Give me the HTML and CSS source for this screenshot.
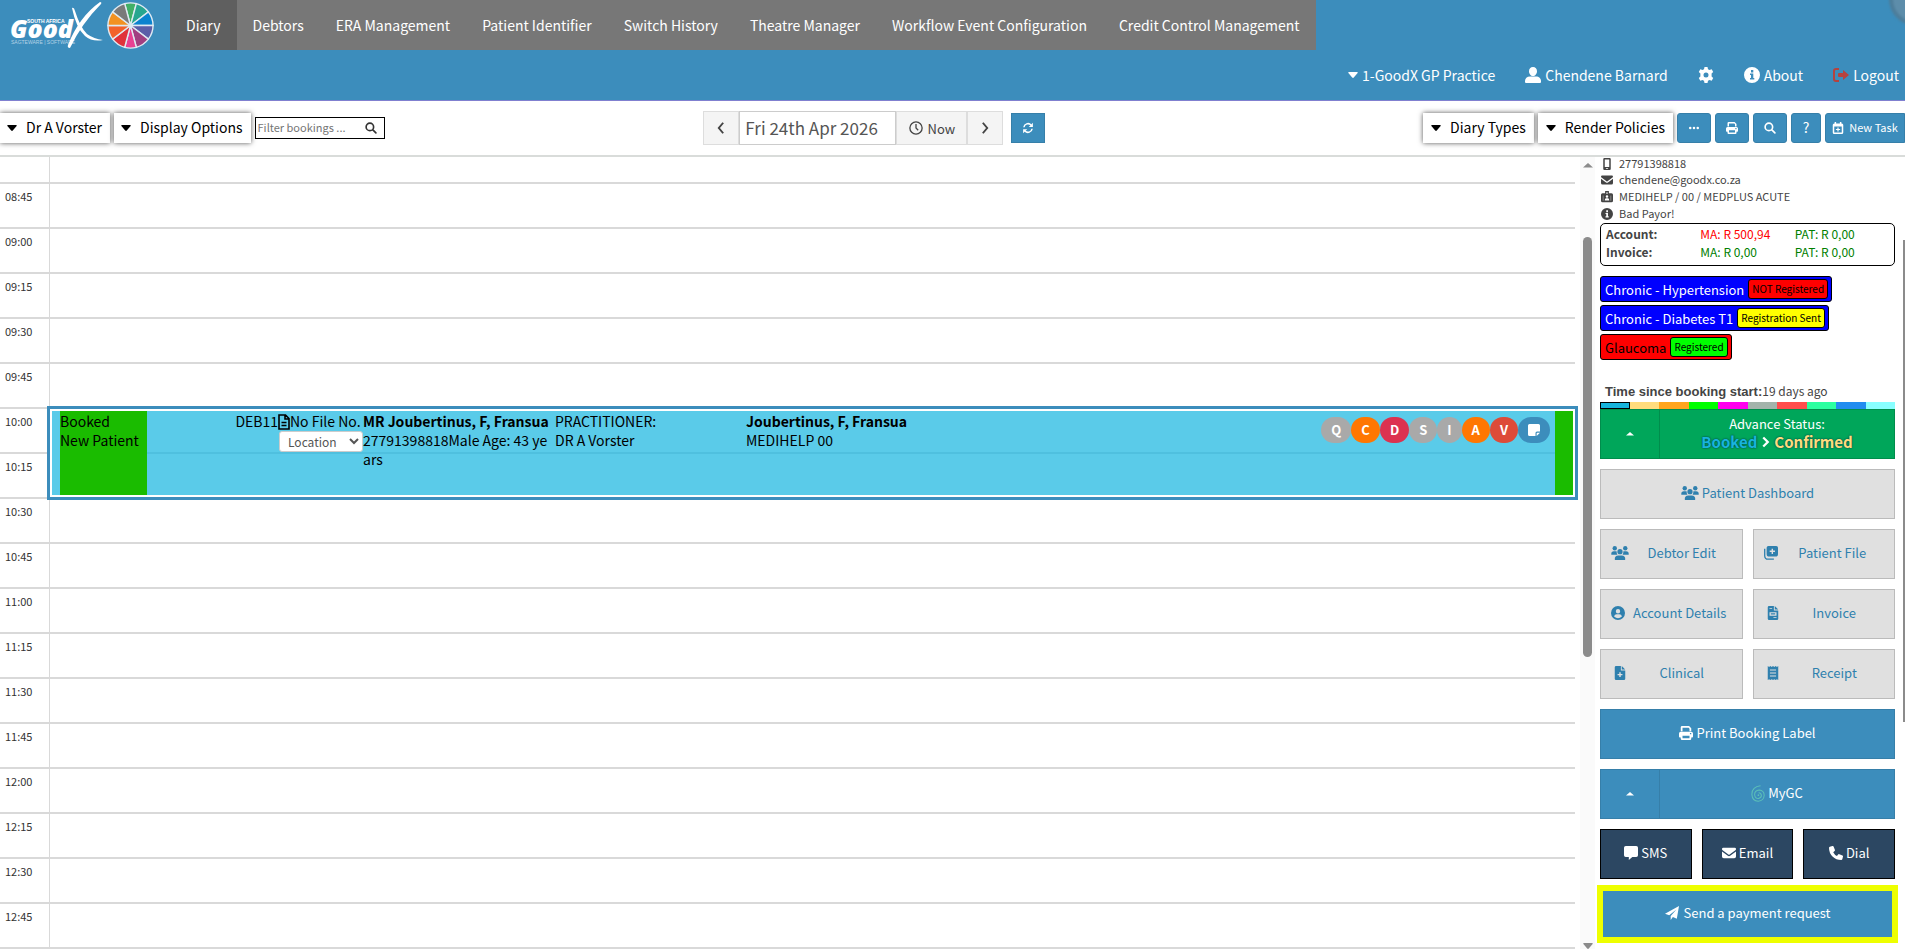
FILE: index.html
```html
<!DOCTYPE html>
<html lang="en">
<head>
    <meta charset="UTF-8">
    <meta name="viewport" content="width=device-width, initial-scale=1.0">
    <title>GoodX Diary</title>
    <link rel="stylesheet" href="styles.css">
</head>
<body>

    <!-- icon sprite -->
    <svg class="sprite" aria-hidden="true">
        <symbol id="i-down" viewBox="0 0 10 6"><path d="M1 0h8q1.400 0 .6 1L5.800 5.500q-.8.8-1.600 0L.4 1Q-.4 0 1 0z"/></symbol>
        <symbol id="i-up" viewBox="0 0 10 6"><path d="M0 5.500L5 1l5 4.500z"/></symbol>
        <symbol id="i-search" viewBox="0 0 16 16"><path fill="none" stroke="currentColor" stroke-width="2.200" stroke-linecap="round" d="M10.500 10.500l4 4M11.500 6.500a5 5 0 1 1-10 0a5 5 0 0 1 10 0z"/></symbol>
        <symbol id="i-left" viewBox="0 0 16 16"><path fill="none" stroke="currentColor" stroke-width="2.200" d="M10.500 2L5.500 8l5 6"/></symbol>
        <symbol id="i-right" viewBox="0 0 16 16"><path fill="none" stroke="currentColor" stroke-width="2.200" d="M5.500 2l5 6l-5 6"/></symbol>
        <symbol id="i-next" viewBox="0 0 12 16"><path fill="none" stroke="currentColor" stroke-width="3" d="M3 2l6 6l-6 6"/></symbol>
        <symbol id="i-clock" viewBox="0 0 16 16"><g fill="none" stroke="currentColor" stroke-width="1.500"><circle cx="8" cy="8" r="7"/><path d="M8 3.500V8l2.500 2.500"/></g></symbol>
        <symbol id="i-sync" viewBox="0 0 16 16"><path fill="none" stroke="currentColor" stroke-width="2" d="M2.500 7a5.500 5.500 0 0 1 9.500-3M13.500 9a5.500 5.500 0 0 1-9.500 3"/><path d="M14.500 1v5.500H9zM1.500 15V9.500H7z"/></symbol>
        <symbol id="i-user" viewBox="0 0 16 16"><path d="M8 0c2.500 0 4 1.800 4 4.200S10.300 9 8 9S4 6.600 4 4.200S5.500 0 8 0zM5 9.500h6c3 0 5 2 5 4.500v1q0 1-1 1H1q-1 0-1-1v-1c0-2.500 2-4.500 5-4.500z"/></symbol>
        <symbol id="i-gear" viewBox="0 0 16 16"><path fill-rule="evenodd" d="M6.500 0h3l.5 2.200 1.500.9 2.200-.8 1.500 2.700L13.600 6.500v3l1.600 1.500-1.500 2.700-2.200-.8-1.500.9-.5 2.200h-3L6 13.800l-1.500-.9-2.200.8L.8 11l1.600-1.500v-3L.8 5l1.500-2.700 2.200.8L6 2.200zM8 5.500a2.500 2.500 0 1 0 0 5a2.500 2.500 0 0 0 0-5z"/></symbol>
        <symbol id="i-info" viewBox="0 0 16 16"><path fill-rule="evenodd" d="M8 0a8 8 0 1 1 0 16A8 8 0 0 1 8 0zM7 3v2.500h2.300V3zM6 6.500V8h1v3H6v1.500h4.300V11h-1V6.500z"/></symbol>
        <symbol id="i-logout" viewBox="0 0 16 16"><path fill="none" stroke="currentColor" stroke-width="2" d="M6 2H3q-2 0-2 2v8q0 2 2 2h3"/><path d="M10 3l6 5-6 5v-3H6q-1 0-1-1V7q0-1 1-1h4z"/></symbol>
        <symbol id="i-dots" viewBox="0 0 16 16"><circle cx="3" cy="8" r="1.700"/><circle cx="8" cy="8" r="1.700"/><circle cx="13" cy="8" r="1.700"/></symbol>
        <symbol id="i-print" viewBox="0 0 16 16"><path fill-rule="evenodd" d="M3.500 0h8L14 2.500V6h-2V3l-1-1H4v4H2V1.500Q2 0 3.500 0zM2 6.500h12q2 0 2 2V12q0 1-1 1h-1v1.500q0 1.500-1.500 1.500h-9Q2 16 2 14.500V13H1q-1 0-1-1V8.500q0-2 2-2zM4 11v3h8v-3zM12.500 8v1.500H14V8z"/></symbol>
        <symbol id="i-plan" viewBox="0 0 16 16"><path fill-rule="evenodd" d="M3.500 0h2v2h5V0h2v2H13q2 0 2 2v10q0 2-2 2H3q-2 0-2-2V4q0-2 2-2h.5zM3 6v8h10V6zM7.200 7.200h1.600V9.200h2v1.600h-2v2H7.200v-2h-2V9.200h2z"/></symbol>
        <symbol id="i-phone" viewBox="0 0 16 16"><path fill-rule="evenodd" d="M4.500 0h7Q13 0 13 1.500v13Q13 16 11.500 16h-7Q3 16 3 14.500v-13Q3 0 4.500 0zM5 2v10h6V2zM6.500 13.300v1h3v-1z"/></symbol>
        <symbol id="i-mail" viewBox="0 0 16 16"><path d="M1.500 2h13Q16 2 16 3.500q0 .8-.7 1.300L8.700 9.700q-.7.500-1.400 0L.7 4.800Q0 4.300 0 3.500 0 2 1.500 2zM0 6.200l6.700 5q1.300 1 2.600 0l6.700-5V12q0 2-2 2H2q-2 0-2-2z"/></symbol>
        <symbol id="i-badge" viewBox="0 0 16 16"><path fill-rule="evenodd" d="M5.500 0h5v3H14q2 0 2 2v8q0 2-2 2H2q-2 0-2-2V5q0-2 2-2h3.500zM7.300 1.500V4h1.400V1.500zM8 5.500a1.700 1.700 0 1 0 0 3.400a1.700 1.700 0 0 0 0-3.400zM6.500 9.500Q5 10 5 12.500h6q0-2.500-1.500-3zM2.500 6v7H3V6zM13 6v7h.5V6z"/></symbol>
        <symbol id="i-file" viewBox="0 0 12 16"><path fill="none" stroke="currentColor" stroke-width="1.600" d="M1 1h6.500L11 4.500V15H1zM7 1v4h4M3.500 8.500h5M3.500 11.500h5"/></symbol>
        <symbol id="i-note" viewBox="0 0 16 16"><path d="M2 0h12q2 0 2 2v8h-4q-2 0-2 2v4H2q-2 0-2-2V2Q0 0 2 0zM11.500 16v-3.500q0-1 1-1H16z"/></symbol>
        <symbol id="i-users" viewBox="0 0 20 16"><circle cx="4" cy="2.500" r="2.500"/><circle cx="16" cy="2.500" r="2.500"/><circle cx="10" cy="6.500" r="3"/><path d="M3 6h2.500q.5 0 .8.200Q5.800 8 7 10H.7Q0 10 0 9.300 0 6 3 6zM14.500 6H17q3 0 3 3.300 0 .7-.7.7H13q1.200-2 .7-3.800.3-.2.800-.2zM8 10.800h4q4 0 4 4.200 0 1-1 1H5q-1 0-1-1 0-4.200 4-4.200z"/></symbol>
        <symbol id="i-medfile" viewBox="0 0 16 16"><path fill-rule="evenodd" d="M5 0h9q2 0 2 2v7q0 3-3 3H6q-3 0-3-3V2q0-2 2-2zM8.700 3v2.200H6.500v1.600h2.200V9h1.600V6.800h2.200V5.200h-2.200V3z"/><path fill="none" stroke="currentColor" stroke-width="1.500" d="M.8 3v8q0 4 4 4h6.500"/></symbol>
        <symbol id="i-usercircle" viewBox="0 0 16 16"><path fill-rule="evenodd" d="M8 0a8 8 0 1 1 0 16A8 8 0 0 1 8 0zM8 3.500a2.500 2.500 0 1 0 0 5a2.500 2.500 0 0 0 0-5zM6.500 9.500Q4 9.500 3.500 12 8 16 12.500 12q-.5-2.500-3-2.500z"/></symbol>
        <symbol id="i-invoice" viewBox="0 0 12 16"><path fill-rule="evenodd" d="M1.500 0H7v5h5v9.500q0 1.500-1.500 1.500h-9Q0 16 0 14.500v-13Q0 0 1.500 0zM8 0l4 4H8zM2 2.500v1h3v-1zM2 7v4h8V7zM3.500 8.300h5v1.400h-5zM6.500 12.800v1H10v-1z"/></symbol>
        <symbol id="i-fileplus" viewBox="0 0 12 16"><path fill-rule="evenodd" d="M1.500 0H7v5h5v9.500q0 1.500-1.500 1.500h-9Q0 16 0 14.500v-13Q0 0 1.500 0zM8 0l4 4H8zM5.200 7v2H3.200v1.600h2v2h1.600v-2h2V9h-2V7z"/></symbol>
        <symbol id="i-receipt" viewBox="0 0 12 16"><path fill-rule="evenodd" d="M0 0l1.500 1L3 0l1.500 1L6 0l1.500 1L9 0l1.500 1L12 0v16l-1.500-1L9 16l-1.500-1L6 16l-1.500-1L3 16l-1.500-1L0 16zM2.500 4v1.200h7V4zM2.500 7.400v1.200h7V7.400zM2.500 10.800V12h7v-1.200z"/></symbol>
        <symbol id="i-spiral" viewBox="0 0 16 20"><path fill="none" stroke="currentColor" stroke-width="1.200" d="M11 1Q1 2 .8 11q.5 8 7.500 8 6.500-.5 7-7Q15 6.500 9.500 6 4 6.500 4 11.500q.5 4.500 4.500 4.500 3.500-.5 3.500-3.800-.5-3-3.300-3"/><circle cx="8.500" cy="12" r="1"/></symbol>
        <symbol id="i-chat" viewBox="0 0 16 16"><path d="M2 0h12q2 0 2 2v8.500q0 2-2 2H9.500L5.500 16v-3.500H2q-2 0-2-2V2Q0 0 2 0z"/></symbol>
        <symbol id="i-call" viewBox="0 0 16 16"><path d="M5.200.6l1.500 3.700q.3.800-.3 1.400L4.800 7q1.500 3 4.300 4.300l1.300-1.700q.6-.6 1.400-.3l3.600 1.500q.8.400.6 1.300l-.8 3q-.3.900-1.200.9Q8 16 4 12T0 2Q0 1.100.9.800L3.900 0q.9-.2 1.300.6z"/></symbol>
        <symbol id="i-plane" viewBox="0 0 16 16"><path d="M16 0l-2.500 14.500L9 12.600 6.500 16v-4.500L13 4l-8.200 6.700L0 8.800z"/></symbol>
    </svg>

    <header class="header">
        <div class="header-top">
            <a href="#" class="logo" aria-label="GoodX South Africa">
                <svg width="97" height="50" viewBox="0 0 97 50">
                    <text x="17" y="23" class="logo-small">SOUTH AFRICA</text>
                    <text x="0" y="38" class="logo-big">Good</text>
                    <text x="1" y="44" class="logo-tag">SAGTEWARE | SOFTWARE</text>
                    <path fill="#fff" d="M62 8q2-1 3 3 5 16 12 23 7 5 16 6-11 2-18-4Q66 28 62 8zM90 2q2 0 1 2Q72 23 60 48q-3 0-2-3Q69 17 90 2z"/>
                </svg>
                <svg width="47" height="47" viewBox="-50 -50 100 100">
                    <g stroke="#dfeaf2" stroke-width="3">
                        <path fill="#41b066" d="M0 0L-12.400-46.400A48 48 0 0 1 12.400-46.400z"/>
                        <path fill="#27a68f" d="M0 0L12.400-46.400A48 48 0 0 1 38-29z"/>
                        <path fill="#0a83cf" d="M0 0L38-29A48 48 0 0 1 48 0z"/>
                        <path fill="#5b5ea8" d="M0 0L48 0A48 48 0 0 1 38 29z"/>
                        <path fill="#a23f81" d="M0 0L38 29A48 48 0 0 1 12.400 46.400z"/>
                        <path fill="#e84193" d="M0 0L12.400 46.400A48 48 0 0 1-12.400 46.400z"/>
                        <path fill="#e0323a" d="M0 0L-12.400 46.400A48 48 0 0 1-38 29z"/>
                        <path fill="#f2622a" d="M0 0L-38 29A48 48 0 0 1-48 0z"/>
                        <path fill="#f29222" d="M0 0L-48 0A48 48 0 0 1-38-29z"/>
                        <path fill="#7a7a7a" d="M0 0L-38-29A48 48 0 0 1-12.400-46.400z"/>
                    </g>
                </svg>
            </a>
            <nav class="nav">
                <a href="#" class="active">Diary</a>
                <a href="#">Debtors</a>
                <a href="#">ERA Management</a>
                <a href="#">Patient Identifier</a>
                <a href="#">Switch History</a>
                <a href="#">Theatre Manager</a>
                <a href="#">Workflow Event Configuration</a>
                <a href="#">Credit Control Management</a>
            </nav>
        </div>
        <div class="header-user">
            <a href="#"><svg class="caret"><use href="#i-down"/></svg>1-GoodX GP Practice</a>
            <a href="#"><svg class="icon"><use href="#i-user"/></svg>Chendene Barnard</a>
            <a href="#" aria-label="Settings"><svg class="icon"><use href="#i-gear"/></svg></a>
            <a href="#"><svg class="icon"><use href="#i-info"/></svg>About</a>
            <a href="#"><svg class="icon red"><use href="#i-logout"/></svg>Logout</a>
        </div>
        <div class="corner"></div>
    </header>

    <div class="toolbar">
        <div class="tools">
            <button class="drop"><svg class="caret"><use href="#i-down"/></svg>Dr A Vorster</button>
            <button class="drop"><svg class="caret"><use href="#i-down"/></svg>Display Options</button>
            <div class="filter">
                <input type="text" placeholder="Filter bookings ..." aria-label="Filter bookings">
                <svg class="icon-xs"><use href="#i-search"/></svg>
            </div>
        </div>
        <div class="date-nav">
            <button class="step" aria-label="Previous day"><svg class="icon-md"><use href="#i-left"/></svg></button>
            <input type="text" value="Fri 24th Apr 2026" aria-label="Date">
            <button class="now"><svg class="icon-md"><use href="#i-clock"/></svg>Now</button>
            <button class="step" aria-label="Next day"><svg class="icon-md"><use href="#i-right"/></svg></button>
            <button class="blue refresh" aria-label="Refresh"><svg class="icon-xs"><use href="#i-sync"/></svg></button>
        </div>
        <div class="tools right">
            <button class="drop"><svg class="caret"><use href="#i-down"/></svg>Diary Types</button>
            <button class="drop"><svg class="caret"><use href="#i-down"/></svg>Render Policies</button>
            <button class="blue" aria-label="More"><svg class="icon-xs"><use href="#i-dots"/></svg></button>
            <button class="blue" aria-label="Print"><svg class="icon-xs"><use href="#i-print"/></svg></button>
            <button class="blue" aria-label="Search"><svg class="icon-xs"><use href="#i-search"/></svg></button>
            <button class="blue help">?</button>
            <button class="blue task"><svg class="icon-xs"><use href="#i-plan"/></svg>New Task</button>
        </div>
    </div>

    <main class="main">
        <section class="diary">
            <table class="slots">
                <tr class="cut"><th></th><td></td></tr>
                <tr><th>08:45</th><td></td></tr>
                <tr><th>09:00</th><td></td></tr>
                <tr><th>09:15</th><td></td></tr>
                <tr><th>09:30</th><td></td></tr>
                <tr><th>09:45</th><td></td></tr>
                <tr><th>10:00</th><td></td></tr>
                <tr><th>10:15</th><td></td></tr>
                <tr><th>10:30</th><td></td></tr>
                <tr><th>10:45</th><td></td></tr>
                <tr><th>11:00</th><td></td></tr>
                <tr><th>11:15</th><td></td></tr>
                <tr><th>11:30</th><td></td></tr>
                <tr><th>11:45</th><td></td></tr>
                <tr><th>12:00</th><td></td></tr>
                <tr><th>12:15</th><td></td></tr>
                <tr><th>12:30</th><td></td></tr>
                <tr><th>12:45</th><td></td></tr>
            </table>

            <!-- booking lies over the 10:00 and 10:15 slots -->
            <article class="booking">
                <div class="state">Booked<br>New Patient</div>
                <div class="debtor">DEB11</div>
                <div class="file">
                    <div class="file-no"><svg class="file-icon"><use href="#i-file"/></svg>No File No.</div>
                    <select aria-label="Location"><option>Location</option></select>
                </div>
                <div class="patient"><b>MR Joubertinus, F, Fransua</b><br>27791398818Male Age: 43 years</div>
                <div class="doctor">PRACTITIONER:<br>DR A Vorster</div>
                <div class="member"><b>Joubertinus, F, Fransua</b><br>MEDIHELP 00</div>
                <div class="flags">
                    <span class="flag grey">Q</span>
                    <span class="flag orange">C</span>
                    <span class="flag crimson">D</span>
                    <span class="flag grey">S</span>
                    <span class="flag grey">I</span>
                    <span class="flag orange">A</span>
                    <span class="flag brick">V</span>
                    <span class="flag note"><svg class="icon-xs"><use href="#i-note"/></svg></span>
                </div>
                <div class="edge"></div>
            </article>
        </section>

        <div class="scroll">
            <svg class="caret"><use href="#i-up"/></svg>
            <div class="thumb"></div>
            <svg class="caret"><use href="#i-down"/></svg>
        </div>

        <aside class="side">
            <ul class="contact">
                <li><svg class="icon-xs"><use href="#i-phone"/></svg>27791398818</li>
                <li><svg class="icon-xs"><use href="#i-mail"/></svg>chendene@goodx.co.za</li>
                <li><svg class="icon-xs"><use href="#i-badge"/></svg>MEDIHELP / 00 / MEDPLUS ACUTE</li>
                <li><svg class="icon-xs"><use href="#i-info"/></svg>Bad Payor!</li>
            </ul>
            <div class="account">
                <table>
                    <tr><th>Account:</th><td class="owed">MA: R 500,94</td><td>PAT: R 0,00</td></tr>
                    <tr><th>Invoice:</th><td>MA: R 0,00</td><td>PAT: R 0,00</td></tr>
                </table>
            </div>
            <div class="tags">
                <div class="tag chronic">Chronic - Hypertension<span class="reg none">NOT Registered</span></div>
                <div class="tag chronic">Chronic - Diabetes T1<span class="reg sent">Registration Sent</span></div>
                <div class="tag alert">Glaucoma<span class="reg done">Registered</span></div>
            </div>
            <p class="since"><b>Time since booking start:</b>19 days ago</p>
            <div class="statuses">
                <i class="s1"></i><i class="s2"></i><i class="s3"></i><i class="s4"></i><i class="s5"></i>
                <i class="s6"></i><i class="s7"></i><i class="s8"></i><i class="s9"></i><i class="s10"></i>
            </div>
            <div class="split green">
                <button aria-label="Choose status"><svg class="caret-sm"><use href="#i-up"/></svg></button>
                <button class="advance">
                    <span>Advance Status:</span>
                    <span class="steps"><b class="from">Booked</b><svg class="next"><use href="#i-next"/></svg><b class="to">Confirmed</b></span>
                </button>
            </div>
            <div class="actions">
                <button class="btn wide"><svg class="icon-users"><use href="#i-users"/></svg>Patient Dashboard</button>
                <button class="btn"><svg class="icon-users"><use href="#i-users"/></svg><span>Debtor Edit</span></button>
                <button class="btn"><svg class="icon-md"><use href="#i-medfile"/></svg><span>Patient File</span></button>
                <button class="btn"><svg class="icon-md"><use href="#i-usercircle"/></svg><span>Account Details</span></button>
                <button class="btn"><svg class="icon-users"><use href="#i-invoice"/></svg><span>Invoice</span></button>
                <button class="btn"><svg class="icon-users"><use href="#i-fileplus"/></svg><span>Clinical</span></button>
                <button class="btn"><svg class="icon-users"><use href="#i-receipt"/></svg><span>Receipt</span></button>
                <button class="btn wide primary"><svg class="icon-md"><use href="#i-print"/></svg>Print Booking Label</button>
            </div>
            <div class="split">
                <button aria-label="MyGC options"><svg class="caret-sm"><use href="#i-up"/></svg></button>
                <button><svg class="spiral"><use href="#i-spiral"/></svg>MyGC</button>
            </div>
            <div class="messages">
                <button><svg class="icon-md"><use href="#i-chat"/></svg>SMS</button>
                <button><svg class="icon-md"><use href="#i-mail"/></svg>Email</button>
                <button><svg class="icon-md"><use href="#i-call"/></svg>Dial</button>
            </div>
            <button class="payment"><svg class="icon-md"><use href="#i-plane"/></svg>Send a payment request</button>
        </aside>
        <div class="page-thumb"></div>
    </main>

</body>
</html>
```
FILE: styles.css
```css
* {
    box-sizing: border-box;
}
body {
    margin: 0;
    height: 100vh;
    display: flex;
    flex-direction: column;
    overflow: hidden;
    background: #fff;
    color: #000;
    font-family: "Noto Sans CJK SC", "Noto Sans", sans-serif;
    font-size: 14px;
    line-height: 19px;
}
button, input, select {
    font-family: inherit;
    font-size: inherit;
    line-height: inherit;
    margin: 0;
    cursor: pointer;
}
svg {
    fill: currentColor;
    flex: none;
}
.sprite {
    display: none;
}
.icon {
    width: 16px;
    height: 16px;
}
.icon-md {
    width: 14px;
    height: 14px;
}
.icon-xs {
    width: 12px;
    height: 12px;
}
.icon-users {
    width: 18px;
    height: 14px;
}
.caret {
    width: 10px;
    height: 6px;
}
.caret-sm {
    width: 8px;
    height: 5px;
}

/* Header */
.header {
    position: relative;
    flex: none;
    background: #3c8dbc;
    border-bottom: 1px solid #8080d0;
    color: #fff;
    overflow: hidden;
}
.header a {
    color: inherit;
    text-decoration: none;
}
.header-top {
    display: flex;
    height: 50px;
}
.logo {
    display: flex;
    width: 170px;
    padding-left: 10px;
    align-items: center;
}
.logo-big {
    font: italic 900 25px "Open Sans", sans-serif;
    fill: #fff;
}
.logo-small {
    font: bold 5px "Liberation Sans", sans-serif;
    fill: #fff;
}
.logo-tag {
    font: 5px "Liberation Sans", sans-serif;
    fill: #b5d3e6;
}
.nav {
    display: flex;
    background: #777;
}
.nav a {
    padding: 0 16px;
    line-height: 50px;
}
.nav .active {
    background: #5f5f5f;
}
.header-user {
    display: flex;
    justify-content: flex-end;
    align-items: center;
    gap: 30px;
    height: 50px;
    padding-right: 6px;
}
.header-user a {
    display: flex;
    align-items: center;
    gap: 4px;
}
.red {
    color: #b5423e;
}
.corner {
    position: absolute;
    top: -28px;
    right: -38px;
    width: 54px;
    height: 54px;
    border: 4px solid #4d7d9a;
    border-radius: 50%;
    background: #5d8daa;
    filter: blur(1px);
}

/* Toolbar */
.toolbar {
    flex: none;
    display: grid;
    grid-template-columns: 9fr auto 11fr;
    align-items: center;
    height: 56px;
    border-bottom: 2px solid #d9dcda;
}
.tools {
    display: flex;
    align-items: center;
    gap: 4px;
}
.tools.right {
    justify-content: flex-end;
}
.drop {
    display: flex;
    align-items: center;
    gap: 9px;
    height: 30px;
    padding: 0 8px 1px 7px;
    border: 0;
    background: #fff;
    box-shadow: 0 0 5px #555;
}
.right .drop {
    padding-left: 8px;
}
.filter {
    display: flex;
    align-items: center;
    width: 130px;
    height: 22px;
    padding-right: 7px;
    border: 1px solid #000;
    color: #333;
}
.filter input {
    flex: 1;
    min-width: 0;
    border: 0;
    padding: 0 2px 2px;
    outline: 0;
    background: none;
    font-size: 11px;
}
.date-nav {
    display: flex;
    align-items: center;
    color: #444;
}
.date-nav input {
    width: 157px;
    height: 34px;
    padding: 0 5px 1px;
    border: 1px solid #ccc;
    color: #555;
    font-size: 17px;
}
.step, .now {
    display: flex;
    align-items: center;
    justify-content: center;
    gap: 5px;
    width: 36px;
    height: 34px;
    padding: 0;
    border: 1px solid #ddd;
    background: #f4f4f4;
    color: #444;
    font-size: 13px;
}
.now {
    width: 71px;
}
.blue {
    display: flex;
    align-items: center;
    justify-content: center;
    gap: 5px;
    width: 34px;
    height: 30px;
    padding: 0 0 1px;
    border: 1px solid #367fa9;
    border-radius: 3px;
    background: #3c8dbc;
    color: #fff;
}
.refresh {
    margin-left: 8px;
    border-radius: 0;
}
.help {
    width: 30px;
}
.task {
    width: 80px;
    font-size: 11px;
    border-radius: 3px 0 0 3px;
}

/* Diary */
.main {
    position: relative;
    flex: 1;
    display: flex;
    min-height: 0;
}
.diary {
    position: relative;
    flex: 1;
    padding-right: 5px;
    overflow: hidden;
}
.slots {
    width: 100%;
    border-spacing: 0;
}
.slots tr {
    height: 45px;
}
.slots tr.cut {
    height: 27px;
}
.slots th, .slots td {
    padding: 3px 5px 0;
    border-bottom: 2px solid #d9d9d9;
}
.slots th {
    width: 50px;
    border-right: 1px solid #d9d9d9;
    color: #333;
    font-size: 11px;
    font-weight: normal;
    text-align: left;
    vertical-align: top;
}
.booking {
    position: absolute;
    top: 249px;
    left: 47px;
    right: 2px;
    height: 94px;
    display: flex;
    padding: 2px 2px 2px 10px;
    border: 3px solid #3c8dbc;
    background: linear-gradient(#4fc0df, #4fc0df) 0 41px / 100% 2px no-repeat content-box, #5acbe9;
    box-shadow: inset 0 0 0 2px #fff;
}
.state {
    width: 87px;
    background: #1abc00;
}
.state, .debtor, .file, .patient, .doctor, .member {
    padding-top: 1px;
}
.debtor {
    width: 131px;
    text-align: right;
}
.file {
    width: 85px;
}
.file-no {
    display: flex;
    align-items: center;
    white-space: nowrap;
}
.file-icon {
    width: 12px;
    height: 16px;
}
.file select {
    width: 84px;
    height: 21px;
    margin-left: 1px;
    padding: 0 4px;
    border: 1px solid #ccc;
    border-radius: 3px;
    background: #fff;
    color: #555;
    font-size: 12px;
}
.patient {
    width: 192px;
    padding-right: 4px;
    word-break: break-all;
}
.patient b {
    white-space: nowrap;
}
.doctor {
    width: 191px;
}
.member {
    flex: 1;
}
.flags {
    display: flex;
    padding: 6px 5px 0 0;
}
.flag {
    display: flex;
    align-items: center;
    height: 26px;
    padding: 0 10px 1px;
    border-radius: 13px;
    color: #fff;
    font-size: 13px;
    font-weight: bold;
}
.grey {
    background: #a9a9a9;
}
.orange {
    background: #ff7701;
}
.crimson {
    background: #dc3250;
}
.brick {
    background: #dd4b39;
}
.note {
    background: #3c8dbc;
}
.edge {
    width: 18px;
    background: #1abc00;
}

/* Scrollbars */
.scroll {
    display: flex;
    flex-direction: column;
    align-items: center;
    width: 15px;
    padding-top: 5px;
    background: #fafafa;
    color: #8b8b8b;
}
.thumb {
    width: 9px;
    height: 420px;
    margin: 69px 0 auto;
    border-radius: 5px;
    background: #8b8b8b;
}
.page-thumb {
    position: absolute;
    top: 83px;
    right: 0;
    width: 2px;
    height: 482px;
    background: #8b8b8b;
}

/* Sidebar */
.side {
    width: 310px;
    padding: 0 10px 0 5px;
    color: #444;
    overflow: hidden;
}
.side button {
    display: flex;
    align-items: center;
    justify-content: center;
    gap: 3px;
    height: 50px;
    padding: 0 0 2px;
    border: 1px solid #367fa9;
    background: #3c8dbc;
    color: #fff;
    font-size: 13px;
    line-height: 18px;
}
.contact {
    margin: 0;
    padding: 0;
    list-style: none;
    font-size: 11px;
}
.contact li {
    display: flex;
    align-items: center;
    gap: 6px;
    height: 17px;
    padding: 0 0 2px 1px;
}
.contact li:first-child {
    height: 15px;
}
.account {
    padding: 1px 5px 4px;
    border: 1px solid #000;
    border-radius: 5px;
    font-size: 12px;
}
.account table {
    width: 100%;
    border-spacing: 0;
    table-layout: fixed;
}
.account th, .account td {
    padding: 0;
    height: 18px;
    line-height: 18px;
    text-align: left;
}
.account td {
    color: #008000;
}
.account .owed {
    color: #f00;
}
.tags {
    display: flex;
    flex-direction: column;
    align-items: flex-start;
    gap: 3px;
    margin-top: 10px;
}
.tag {
    display: flex;
    align-items: center;
    gap: 4px;
    height: 26px;
    padding: 0 3px 0 4px;
    border: 1px solid #000;
    border-radius: 3px;
    font-size: 13px;
}
.chronic {
    background: #00f;
    color: #fff;
}
.alert {
    background: #f00;
    color: #000;
}
.reg {
    padding: 0 3px;
    border: 1px solid #000;
    border-radius: 3px;
    color: #000;
    font-size: 10px;
    line-height: 18px;
}
.none {
    background: #f00;
}
.sent {
    background: #ff0;
}
.done {
    background: #0f0;
}
.since {
    margin: 21px 0 1px;
    padding-left: 5px;
    font-size: 12px;
}
.since b {
    font-family: "Liberation Sans", Arial, sans-serif;
    font-size: 13px;
}
.statuses {
    display: grid;
    grid-template-columns: repeat(10, 1fr);
    height: 7px;
}
.s1 { background: #18b4dc; border: 1px solid #000; }
.s2 { background: #ffdc7d; }
.s3 { background: #ffa51e; }
.s4 { background: #0f0; }
.s5 { background: #f0e; }
.s6 { background: #a3b3ab; }
.s7 { background: #ff4d4d; }
.s8 { background: #2bffa0; }
.s9 { background: #228cf0; }
.s10 { background: #8ff; }
.split {
    display: grid;
    grid-template-columns: 1fr 4fr;
    margin-bottom: 10px;
}
.side .green button {
    background: #00a65a;
    border-color: #008d4c;
}
.split button:first-child {
    border-right: 0;
}
.side .advance {
    flex-direction: column;
    gap: 0;
}
.steps {
    display: flex;
    align-items: center;
    gap: 4px;
    font-size: 15px;
    text-shadow: 0 0 2px #024;
}
.next {
    width: 9px;
    height: 12px;
}
.from {
    color: #18b4dc;
}
.to {
    color: #ffdc7d;
}
.actions {
    display: grid;
    grid-template-columns: 1fr 1fr;
    gap: 10px;
    margin-bottom: 10px;
}
.side .btn {
    padding: 0 10px 2px;
    border-color: #bbb;
    background: #e0e0e0;
    color: #2f80ae;
}
.side .wide {
    grid-column: 1 / 3;
}
.side .primary {
    border-color: #367fa9;
    background: #3c8dbc;
    color: #fff;
}
.btn span {
    flex: 1;
}
.side .spiral {
    width: 14px;
    height: 17px;
    color: #5cc0b8;
}
.messages {
    display: grid;
    grid-template-columns: 1fr 1fr 1fr;
    gap: 10px;
}
.side .messages button {
    border-color: #000;
    background: #2c4762;
}
.side .payment {
    width: calc(100% + 6px);
    height: 58px;
    margin: 6px -3px 0;
    gap: 5px;
    border: 6px solid #eeff00;
}
```
